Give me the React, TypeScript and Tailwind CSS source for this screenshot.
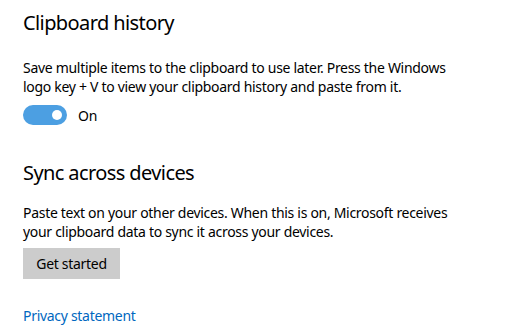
export default function App() {
  return (
    <div className="w-[516px] h-[332px] bg-white overflow-hidden pl-[23px] text-black font-['Noto_Sans',sans-serif]">
      <h2 className="mt-[9px] text-[20px] leading-[28px] font-normal tracking-[-0.6px]">Clipboard history</h2>
      <p className="mt-[21px] text-[14px] leading-[19px] tracking-[-0.3px] whitespace-nowrap">
        Save multiple items to the clipboard to use later. Press the Windows
        <br />
        logo key + V to view your clipboard history and paste from it.
      </p>
      <div className="mt-[9px] flex items-center">
        <div className="w-[44px] h-[20px] rounded-full bg-[#4c9fe2] flex items-center justify-end pr-[5px]">
          <div className="w-[10px] h-[10px] rounded-full bg-white" />
        </div>
        <span className="ml-[11px] text-[14px] leading-[19px] tracking-[-0.3px]">On</span>
      </div>
      <h2 className="mt-[34px] text-[20px] leading-[28px] font-normal tracking-[-0.6px]">Sync across devices</h2>
      <p className="mt-[16px] text-[14px] leading-[19px] tracking-[-0.3px] whitespace-nowrap">
        Paste text on your other devices. When this is on, Microsoft receives
        <br />
        your clipboard data to sync it across your devices.
      </p>
      <button className="mt-[7px] w-[97px] h-[31px] bg-[#cccccc] text-[14px] leading-[19px] tracking-[-0.3px] flex items-center justify-center">
        Get started
      </button>
      <a className="block mt-[27px] text-[14px] leading-[19px] tracking-[-0.3px] text-[#0067c0] w-max">Privacy statement</a>
    </div>
  );
}
